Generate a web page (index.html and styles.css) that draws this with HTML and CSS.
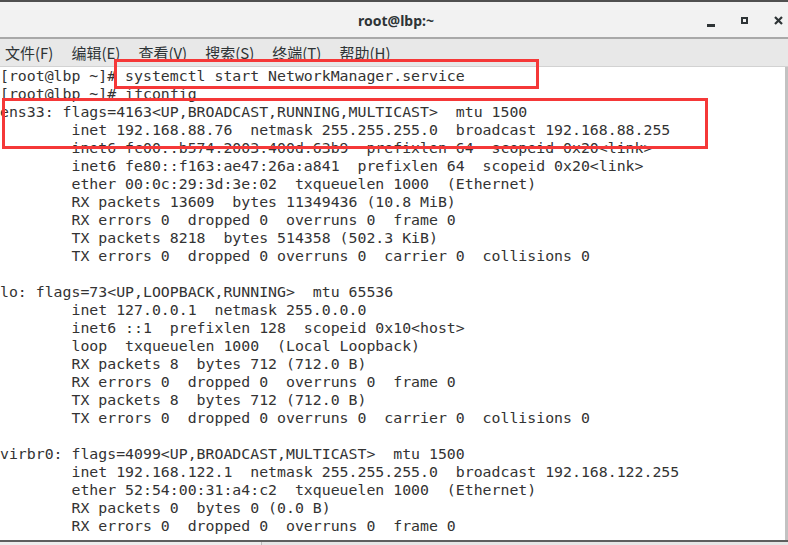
FILE: index.html
```html
<!DOCTYPE html>
<html lang="zh-CN">
<head>
    <meta charset="UTF-8">
    <meta name="viewport" content="width=device-width, initial-scale=1.0">
    <title>root@lbp:~</title>
    <link rel="stylesheet" href="styles.css">
</head>
<body>
    <div class="window">
        <div class="titlebar">
            <span class="title">root@lbp:~</span>
            <div class="controls">
                <span class="btn-min"></span>
                <span class="btn-max"></span>
                <svg class="btn-close" width="9" height="9" viewBox="0 0 9 9">
                    <path d="M1 1 L8 8 M8 1 L1 8" stroke="#2e3436" stroke-width="2.2" fill="none"/>
                </svg>
            </div>
        </div>

        <div class="menubar">
            <span>文件(F)</span>
            <span>编辑(E)</span>
            <span>查看(V)</span>
            <span>搜索(S)</span>
            <span>终端(T)</span>
            <span>帮助(H)</span>
        </div>

        <div class="terminal">
<pre class="output">[root@lbp ~]# systemctl start NetworkManager.service
[root@lbp ~]# ifconfig
ens33: flags=4163&lt;UP,BROADCAST,RUNNING,MULTICAST&gt;  mtu 1500
        inet 192.168.88.76  netmask 255.255.255.0  broadcast 192.168.88.255
        inet6 fc00::b574:2003:400d:63b9  prefixlen 64  scopeid 0x20&lt;link&gt;
        inet6 fe80::f163:ae47:26a:a841  prefixlen 64  scopeid 0x20&lt;link&gt;
        ether 00:0c:29:3d:3e:02  txqueuelen 1000  (Ethernet)
        RX packets 13609  bytes 11349436 (10.8 MiB)
        RX errors 0  dropped 0  overruns 0  frame 0
        TX packets 8218  bytes 514358 (502.3 KiB)
        TX errors 0  dropped 0 overruns 0  carrier 0  collisions 0

lo: flags=73&lt;UP,LOOPBACK,RUNNING&gt;  mtu 65536
        inet 127.0.0.1  netmask 255.0.0.0
        inet6 ::1  prefixlen 128  scopeid 0x10&lt;host&gt;
        loop  txqueuelen 1000  (Local Loopback)
        RX packets 8  bytes 712 (712.0 B)
        RX errors 0  dropped 0  overruns 0  frame 0
        TX packets 8  bytes 712 (712.0 B)
        TX errors 0  dropped 0 overruns 0  carrier 0  collisions 0

virbr0: flags=4099&lt;UP,BROADCAST,MULTICAST&gt;  mtu 1500
        inet 192.168.122.1  netmask 255.255.255.0  broadcast 192.168.122.255
        ether 52:54:00:31:a4:c2  txqueuelen 1000  (Ethernet)
        RX packets 0  bytes 0 (0.0 B)
        RX errors 0  dropped 0  overruns 0  frame 0</pre>
            <div class="scrollbar"></div>
        </div>

        <div class="statusbar">
            <div class="hscroll"></div>
        </div>

        <!-- marcações em vermelho por cima da captura -->
        <div class="mark mark-cmd"></div>
        <div class="mark mark-ens"></div>
    </div>
</body>
</html>
```

FILE: styles.css
```css
* {
    margin: 0;
    padding: 0;
    box-sizing: border-box;
}

html, body {
    width: 788px;
    height: 545px;
    overflow: hidden;
    background: #e8e8e8;
}

.window {
    position: relative;
    width: 788px;
    height: 545px;
    display: flex;
    flex-direction: column;
    border-top: 2px solid #505050;
}

.titlebar {
    height: 37px;
    flex-shrink: 0;
    background: #f2f2f2;
    border-bottom: 2px solid #a9a9a9;
    display: flex;
    align-items: center;
    justify-content: center;
    position: relative;
}

.title {
    font-family: "Noto Sans", "DejaVu Sans", sans-serif;
    font-weight: bold;
    font-size: 14px;
    color: #2e3436;
    margin-left: 4px;
    margin-top: 1px;
}

.controls {
    position: absolute;
    right: 5px;
    top: 0;
    height: 35px;
    display: flex;
    align-items: center;
    gap: 26px;
}

.btn-min {
    width: 8px;
    height: 3px;
    background: #2e3436;
    margin-top: 11px;
}

.btn-max {
    width: 7px;
    height: 7px;
    border: 2px solid #2e3436;
    margin-top: 1px;
}

.btn-close {
    display: block;
    margin-top: 1px;
}

.menubar {
    height: 28px;
    flex-shrink: 0;
    background: #e8e8e8;
    border-bottom: 1px solid #d2d2d2;
    display: flex;
    align-items: center;
    gap: 18px;
    padding-left: 5px;
    padding-bottom: 1px;
    font-family: "Noto Sans CJK SC", "Noto Sans", sans-serif;
    font-size: 15px;
    color: #2e3436;
}

.terminal {
    flex: 1;
    background: #fff;
    display: flex;
    overflow: hidden;
}

.output {
    flex: 1;
    font-family: "DejaVu Sans Mono", monospace;
    font-size: 14.85px;
    line-height: 18px;
    color: #333;
    white-space: pre;
    overflow: hidden;
}

.scrollbar {
    width: 3px;
    background: #c2c2c2;
}

.statusbar {
    height: 5px;
    flex-shrink: 0;
    background: #e6e6e6;
    border-top: 2px solid #5e5e5e;
}

.hscroll {
    width: 262px;
    height: 3px;
    background: #ededed;
    border-right: 1px solid #bdbdbd;
}

.mark {
    position: absolute;
    border: 3px solid #f53838;
}

.mark-cmd {
    left: 114px;
    top: 57px;
    width: 425px;
    height: 30px;
}

.mark-ens {
    left: 2px;
    top: 96px;
    width: 706px;
    height: 51px;
}
```
